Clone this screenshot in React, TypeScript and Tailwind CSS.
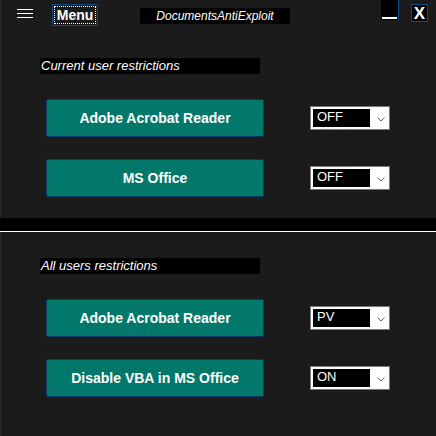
import React from "react";

const font = { fontFamily: '"Liberation Sans", Arial, sans-serif' };

function Hamburger() {
  return (
    <div className="mt-[9px] flex w-[16px] flex-col gap-[3px]">
      <div className="h-[1px] bg-white" />
      <div className="h-[1px] bg-white" />
      <div className="h-[1px] bg-white" />
    </div>
  );
}

function Chevron() {
  return (
    <svg width="8" height="5" viewBox="0 0 8 5" className="ml-[7px] mt-[8px]">
      <path d="M0.5 0.5 L4 4 L7.5 0.5" fill="none" stroke="#666666" strokeWidth="1" />
    </svg>
  );
}

function Select({ value }: { value: string }) {
  return (
    <div className="flex h-[24px] w-[80px] items-start border border-[#7a7a7a] bg-white pl-[2px] pt-[2px]">
      <div className="h-[18px] w-[57px] bg-black pl-[4px] text-[13px] leading-[16px] text-white">
        {value}
      </div>
      <Chevron />
    </div>
  );
}

function Row({ label, value, first }: { label: string; value: string; first?: boolean }) {
  return (
    <div className={`flex items-center ${first ? "mt-[25px]" : "mt-[22px]"}`}>
      <button className="ml-[45px] flex h-[38px] w-[218px] items-center justify-center rounded-[2px] border border-[#0d3a66] bg-[#02786a] text-[14px] font-bold text-white">
        {label}
      </button>
      <div className="ml-[46px]">
        <Select value={value} />
      </div>
    </div>
  );
}

function SectionLabel({ text }: { text: string }) {
  return (
    <div className="ml-[39px] h-[16px] w-[220px] bg-black pl-[1px] text-[13px] italic leading-[16px] text-white">
      {text}
    </div>
  );
}

export default function App() {
  return (
    <div className="flex h-[436px] w-[436px] flex-col overflow-hidden bg-[#1b1b1b]" style={font}>
      {/* upper panel */}
      <div className="flex h-[218px] flex-col border-l border-[#2a2a2a]">
        <div className="flex h-[26px] items-start pl-[16px]">
          <Hamburger />
          <button className="ml-[19px] mt-[4px] flex h-[22px] w-[46px] items-center justify-center border border-[#0f4a86] p-[1px]">
            <span className="flex h-full w-full items-center justify-center border border-dotted border-white text-[14px] font-bold leading-none text-white">
              Menu
            </span>
          </button>
          <div className="ml-[42px] mt-[8px] flex h-[16px] w-[150px] items-center justify-center bg-black text-[12px] italic leading-none text-white">
            DocumentsAntiExploit
          </div>
          <button className="ml-[91px] flex h-[20px] w-[18px] items-end justify-center border-r border-[#0f4a86] bg-black pb-[1px]">
            <span className="h-[2px] w-[15px] bg-white" />
          </button>
          <button className="ml-[12px] mt-[4px] flex h-[18px] w-[17px] items-center justify-center border border-[#0f4a86] bg-black text-[17px] font-bold leading-none text-white">
            X
          </button>
        </div>
        <div className="mt-[32px]">
          <SectionLabel text="Current user restrictions" />
        </div>
        <Row label="Adobe Acrobat Reader" value="OFF" first />
        <Row label="MS Office" value="OFF" />
      </div>

      {/* divider */}
      <div className="h-[13px] bg-black" />
      <div className="h-[1px] bg-white" />

      {/* lower panel */}
      <div className="flex flex-1 flex-col border-l border-[#2a2a2a] pt-[26px]">
        <SectionLabel text="All users restrictions" />
        <Row label="Adobe Acrobat Reader" value="PV" first />
        <Row label="Disable VBA in MS Office" value="ON" />
      </div>
    </div>
  );
}
